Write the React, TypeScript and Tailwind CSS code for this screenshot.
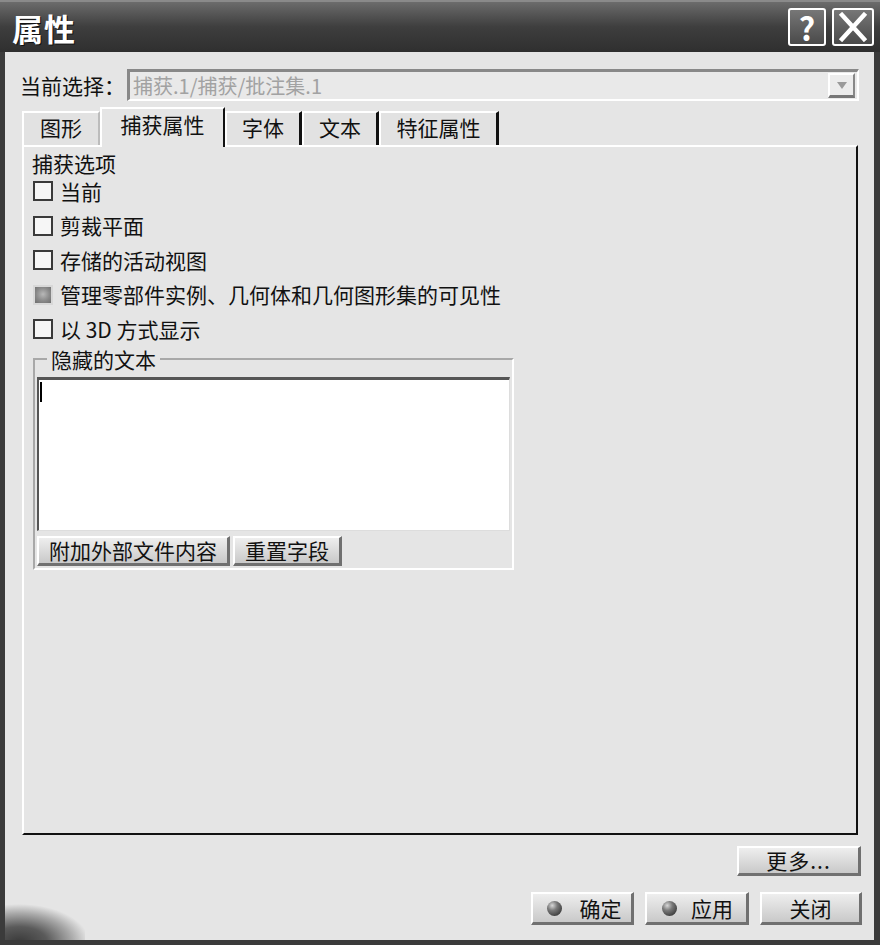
import React from 'react';

const font = "font-['Noto_Sans_CJK_SC',sans-serif]";

const options = [
  { label: '当前', disabled: false },
  { label: '剪裁平面', disabled: false },
  { label: '存储的活动视图', disabled: false },
  { label: '管理零部件实例、几何体和几何图形集的可见性', disabled: true },
  { label: '以 3D 方式显示', disabled: false },
];

const tabs = ['图形', '捕获属性', '字体', '文本', '特征属性'];

const raised =
  'flex items-center justify-center bg-gradient-to-b from-[#eeeeee] to-[#c9c9c9] border-t-2 border-l-2 border-white border-r-[3px] border-b-[3px] border-r-[#707070] border-b-[#707070] text-[#111] text-[21px] leading-none';

const Sphere: React.FC = () => (
  <span className="w-[15px] h-[15px] rounded-full bg-[radial-gradient(circle_at_35%_30%,#d8d8d8_0%,#7a7a7a_35%,#1e1e1e_100%)]" />
);

const App: React.FC = () => {
  return (
    <div className={`relative w-[880px] h-[945px] flex flex-col bg-[#3b3b3b] overflow-hidden ${font}`}>
      {/* Title bar */}
      <div className="h-[52px] flex items-center justify-between pl-[12px] pr-[6px] bg-gradient-to-b from-[#6c6c6c] via-[#3e3e3e] to-[#2f2f2f] border-t-2 border-[#8a8a8a]">
        <span className="text-white text-[31px] font-bold leading-none tracking-[1px] [text-shadow:1px_1px_0_#111]">属性</span>
        <div className="flex items-center gap-[6px]">
          <div className="w-[38px] h-[38px] rounded-[3px] border-2 border-white bg-gradient-to-b from-[#777] to-[#4a4a4a] flex items-center justify-center text-white text-[32px] font-bold leading-none">
            ?
          </div>
          <div className="w-[42px] h-[38px] rounded-[3px] border-2 border-white bg-gradient-to-b from-[#777] to-[#4a4a4a] flex items-center justify-center">
            <svg width="30" height="30" viewBox="0 0 30 30">
              <path d="M4 3 L26 27 M26 3 L4 27" stroke="#fff" strokeWidth="4.5" strokeLinecap="square" />
            </svg>
          </div>
        </div>
      </div>

      {/* Body */}
      <div className="flex-1 ml-[5px] mr-[6px] mb-[5px] bg-[#e5e5e5] px-[15px] pt-[17px] flex flex-col">
        {/* Current selection */}
        <div className="flex items-center h-[32px] gap-[2px]">
          <span className="text-[21px] leading-none text-[#111] w-[105px]">当前选择：</span>
          <div className="flex-1 h-[32px] flex items-center justify-between bg-[#e9e9e9] border-t-[3px] border-l-[3px] border-[#888] border-r-2 border-b-2 border-r-white border-b-white pl-[3px] pr-[2px]">
            <span className="text-[20px] leading-none text-[#a2a2a2]">捕获.1/捕获/批注集.1</span>
            <div className="w-[27px] h-[25px] flex items-center justify-center bg-[#ececec] border-t-2 border-l-2 border-white border-r-2 border-b-[3px] border-r-[#888] border-b-[#777]">
              <svg width="10" height="7" viewBox="0 0 10 7">
                <path d="M0 0 H10 L5 7 Z" fill="#9a9a9a" />
              </svg>
            </div>
          </div>
        </div>

        {/* Tabs */}
        <div className="flex items-end h-[38px] mt-[6px] ml-[2px]">
          {tabs.map((t, i) => {
            const active = i === 1;
            return (
              <div
                key={t}
                className={
                  active
                    ? 'relative z-10 h-[40px] -mb-[2px] w-[125px] flex items-center justify-center border-t-2 border-l-2 border-white border-r-2 border-r-[#111] bg-[#e5e5e5] text-[21px] leading-none text-[#111] pb-[7px]'
                    : `h-[34px] flex items-center justify-center border-t-2 border-l-2 border-white bg-[#e2e2e2] text-[21px] leading-none text-[#111] pb-[4px] ${
                        i === 0 ? 'w-[78px] border-r-2 border-r-[#bcbcbc]' : i === 4 ? 'w-[120px] border-r-[3px] border-r-[#111]' : 'w-[77px] border-r-[3px] border-r-[#111]'
                      }`
                }
              >
                {t}
              </div>
            );
          })}
        </div>

        {/* Panel */}
        <div className="h-[690px] ml-[2px] mr-[1px] border-t-2 border-l-2 border-white border-r-2 border-b-2 border-r-[#111] border-b-[#111] pt-[5px] pl-[8px] flex flex-col">
          <div className="h-[22px] flex items-center text-[21px] leading-none text-[#111]">捕获选项</div>
          {options.map((o) => (
            <div key={o.label} className="h-[34.5px] flex items-center gap-[7px] pl-[1px]">
              {o.disabled ? (
                <span className="w-[20px] h-[20px] bg-[radial-gradient(circle_at_50%_45%,#b8b8b8_0%,#8a8a8a_55%,#6e6e6e_100%)] border-2 border-[#d8d8d8]" />
              ) : (
                <span className="w-[20px] h-[20px] bg-[#f6f6f6] border-2 border-[#3a3a3a]" />
              )}
              <span className="text-[21px] leading-none text-[#111] whitespace-pre">{o.label}</span>
            </div>
          ))}

          {/* Hidden text group */}
          <fieldset className="w-[481px] ml-[1px] border-2 border-t-[#a8a8a8] border-l-[#a8a8a8] border-r-white border-b-white px-[2px] pb-[1px]">
            <legend className="ml-[10px] px-[4px] text-[21px] leading-[24px] text-[#111]">隐藏的文本</legend>
            <div className="h-[154px] mt-[6px] bg-white border-t-[3px] border-l-2 border-[#555] border-r border-b border-r-[#ddd] border-b-[#ddd] pl-[1px] pt-[2px]">
              <div className="w-[2px] h-[20px] bg-black" />
            </div>
            <div className="flex gap-[3px] mt-[5px] mb-[1px]">
              <button className={`${raised} w-[193px] h-[30px]`}>附加外部文件内容</button>
              <button className={`${raised} w-[109px] h-[30px]`}>重置字段</button>
            </div>
          </fieldset>
        </div>

        {/* More */}
        <div className="flex justify-end mt-[11px] -mr-[2px]">
          <button className={`${raised} w-[124px] h-[30px] tracking-[1px]`}>更多...</button>
        </div>

        {/* Bottom buttons */}
        <div className="flex justify-end gap-[11px] mt-[16px] -mr-[3px]">
          <button className={`${raised} w-[103px] h-[33px] gap-[18px] pl-[4px]`}>
            <Sphere />
            确定
          </button>
          <button className={`${raised} w-[104px] h-[33px] gap-[14px] pl-[2px]`}>
            <Sphere />
            应用
          </button>
          <button className={`${raised} w-[102px] h-[33px]`}>关闭</button>
        </div>
      </div>

      {/* corner decoration */}
      <div className="absolute left-[5px] bottom-[5px] w-[80px] h-[42px] bg-[radial-gradient(ellipse_70px_38px_at_14px_44px,#3a3a3a_0%,#5a5a5a_40%,#a8a8a8_75%,rgba(229,229,229,0)_100%)]" />
    </div>
  );
};

export default App;
